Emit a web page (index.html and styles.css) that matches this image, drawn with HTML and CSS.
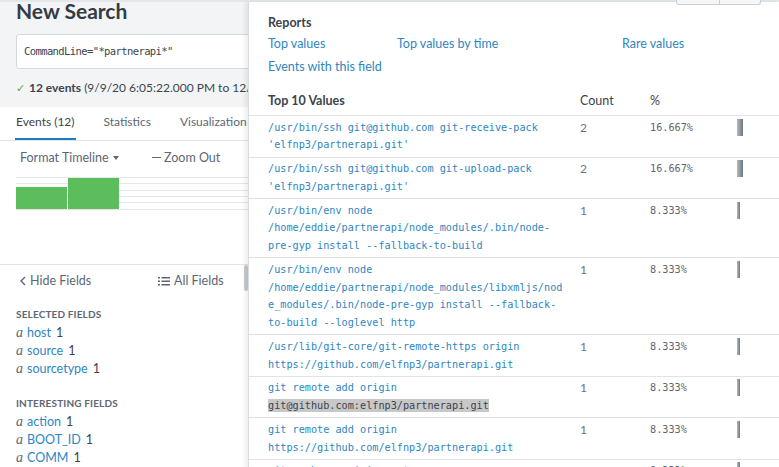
FILE: index.html
```html
<!DOCTYPE html>
<html>
<head>
<meta charset="utf-8">
<title>New Search</title>
<link rel="stylesheet" href="styles.css">
</head>
<body>
<div class="topline"></div>
<div class="app">
  <div class="main">
    <div class="top">
      <h1 class="title">New Search</h1>
      <div class="searchbox">CommandLine="*partnerapi*"</div>
      <div class="status"><span class="check">✓</span><b>12 events</b> (9/9/20 6:05:22.000 PM to 12/1/20 6:05:22.000 PM)</div>
    </div>
    <div class="tabs">
      <span class="tab active">Events (12)</span>
      <span class="tab">Statistics</span>
      <span class="tab">Visualization</span>
    </div>
    <div class="tlbar">
      <span class="fmt">Format Timeline <span class="caret"></span></span>
      <span class="zoom"><span class="dash"></span>Zoom Out</span>
    </div>
    <div class="timeline">
      <div class="grid"></div>
      <div class="bars">
        <div class="tbar" style="height:22px"></div>
        <div class="tbar" style="height:31px"></div>
      </div>
    </div>
    <div class="fields">
      <div class="fcol">
        <div class="frow-top">
          <span class="hide"><svg width="6" height="10" viewBox="0 0 6 10"><path d="M5 1 L1 5 L5 9" fill="none" stroke="#5c6773" stroke-width="1.4"/></svg>Hide Fields</span>
          <span class="all"><svg width="12" height="10" viewBox="0 0 12 10"><rect x="0" y="1" width="2" height="1.5" fill="#5c6773"/><rect x="0" y="4.5" width="2" height="1.5" fill="#5c6773"/><rect x="0" y="8" width="2" height="1.5" fill="#5c6773"/><rect x="3.5" y="1" width="8.5" height="1.5" fill="#5c6773"/><rect x="3.5" y="4.5" width="8.5" height="1.5" fill="#5c6773"/><rect x="3.5" y="8" width="8.5" height="1.5" fill="#5c6773"/></svg>All Fields</span>
        </div>
        <div class="fhead">Selected Fields</div>
        <ul class="flist">
          <li><i>a</i><a>host</a><span>1</span></li>
          <li><i>a</i><a>source</a><span>1</span></li>
          <li><i>a</i><a>sourcetype</a><span>1</span></li>
        </ul>
        <div class="fhead second">Interesting Fields</div>
        <ul class="flist">
          <li><i>a</i><a>action</a><span>1</span></li>
          <li><i>a</i><a>BOOT_ID</a><span>1</span></li>
          <li><i>a</i><a>COMM</a><span>1</span></li>
        </ul>
      </div>
      <div class="scroll"><div class="thumb"></div></div>
    </div>
  </div>
  <div class="popup">
    <div class="tbtns"><span></span><span></span></div>
    <div class="reports">
      <div class="h">Reports</div>
      <div class="links">
        <a>Top values</a><a>Top values by time</a><a>Rare values</a>
        <a>Events with this field</a>
      </div>
    </div>
    <table class="values">
      <colgroup><col class="c-val"><col class="c-count"><col class="c-pct"><col></colgroup>
      <thead>
        <tr><th class="val">Top 10 Values</th><th>Count</th><th>%</th><th></th></tr>
      </thead>
      <tbody>
        <tr><td class="val">/usr/bin/ssh git@github.com git-receive-pack 'elfnp3/partnerapi.git'</td><td class="count">2</td><td class="pct">16.667%</td><td><div class="bar" style="width:6px"></div></td></tr>
        <tr><td class="val">/usr/bin/ssh git@github.com git-upload-pack 'elfnp3/partnerapi.git'</td><td class="count">2</td><td class="pct">16.667%</td><td><div class="bar" style="width:6px"></div></td></tr>
        <tr><td class="val">/usr/bin/env node /home/eddie/partnerapi/node_modules/.bin/node-pre-gyp install --fallback-to-build</td><td class="count">1</td><td class="pct">8.333%</td><td><div class="bar" style="width:3px"></div></td></tr>
        <tr><td class="val">/usr/bin/env node /home/eddie/partnerapi/node_modules/libxmljs/node_modules/.bin/node-pre-gyp install --fallback-to-build --loglevel http</td><td class="count">1</td><td class="pct">8.333%</td><td><div class="bar" style="width:3px"></div></td></tr>
        <tr><td class="val">/usr/lib/git-core/git-remote-https origin https://github.com/elfnp3/partnerapi.git</td><td class="count">1</td><td class="pct">8.333%</td><td><div class="bar" style="width:3px"></div></td></tr>
        <tr><td class="val">git remote add origin <span class="sel">git@github.com:elfnp3/partnerapi.git</span></td><td class="count">1</td><td class="pct">8.333%</td><td><div class="bar" style="width:3px"></div></td></tr>
        <tr><td class="val">git remote add origin https://github.com/elfnp3/partnerapi.git</td><td class="count">1</td><td class="pct">8.333%</td><td><div class="bar" style="width:3px"></div></td></tr>
        <tr><td class="val">git push -u origin master</td><td class="count">1</td><td class="pct">8.333%</td><td><div class="bar" style="width:3px"></div></td></tr>
      </tbody>
    </table>
  </div>
</div>
</body>
</html>
```

FILE: styles.css
```css
* { box-sizing: border-box; }
html, body { margin: 0; padding: 0; }
body {
  width: 779px;
  height: 467px;
  overflow: hidden;
  background: #fff;
  color: #3c444d;
  font-family: Lato, "Open Sans", sans-serif;
  font-size: 12.5px;
}
a { color: #2e86c1; text-decoration: none; }

.topline { height: 2px; background: #e4e7ea; }
.app { display: flex; height: 465px; }

/* ---------- left main area ---------- */
.main {
  width: 248px;
  flex: none;
  overflow: hidden;
  display: flex;
  flex-direction: column;
  background: #fff;
  white-space: nowrap;
}
.top { height: 105px; background: #f2f4f5; padding-left: 16px; }
.title {
  margin: -2px 0 0 0;
  font-size: 21px;
  font-weight: 700;
  line-height: 22px;
  color: #343b42;
}
.searchbox {
  margin-top: 12px;
  width: 320px;
  height: 35px;
  background: #fff;
  border: 1px solid #d3d9de;
  border-radius: 3px;
  padding-left: 7px;
  font-family: "DejaVu Sans Mono", monospace;
  font-size: 10.5px;
  letter-spacing: -0.6px;
  line-height: 33px;
  color: #3c444d;
}
.status { margin-top: 11px; line-height: 16px; font-size: 12px; color: #3c444d; }
.status b { font-weight: 700; }
.check { color: #65a637; margin-right: 4px; font-size: 11px; }

.tabs {
  height: 34px;
  display: flex;
  gap: 27px;
  padding: 7px 0 0 15px;
  border-bottom: 1px solid #e1e6eb;
  background: #fff;
  font-size: 12px;
}
.tab { line-height: 16px; height: 26px; color: #5c6773; padding: 0 1px; }
.tab.active { color: #3c444d; border-bottom: 2px solid #1a7dc0; }

.tlbar { display: flex; padding: 9px 0 0 20px; line-height: 16px; color: #5c6773; }
.fmt { width: 132px; }
.caret {
  display: inline-block;
  width: 0; height: 0;
  border-left: 3px solid transparent;
  border-right: 3px solid transparent;
  border-top: 4px solid #5c6773;
  vertical-align: 2px;
  margin-left: 1px;
}
.dash { display: inline-block; width: 9px; height: 1.5px; background: #5c6773; vertical-align: 4px; margin-right: 3px; }

.timeline { margin: 11px 0 0 16px; height: 33px; display: grid; }
.timeline > * { grid-area: 1 / 1; }
.grid {
  background: repeating-linear-gradient(to bottom, #e4e7ea 0, #e4e7ea 1px, transparent 1px, transparent 6.33px);
}
.bars { display: flex; align-items: flex-end; gap: 1px; padding-bottom: 1px; }
.tbar { width: 51px; background: #5cbd5c; }

.fields { margin-top: 54px; border-top: 1px solid #e1e6eb; display: flex; flex: 1; }
.fcol { flex: 1; }
.scroll { width: 4px; }
.thumb { height: 26px; background: #c6cbcf; border-radius: 2px; }
.frow-top {
  display: flex;
  align-items: flex-start;
  height: 33px;
  padding: 8px 0 0 20px;
  line-height: 16px;
  color: #5c6773;
}
.hide { width: 138px; height: 16px; display: flex; align-items: center; }
.hide svg { margin-right: 4px; }
.all { height: 16px; display: flex; align-items: center; }
.all svg { margin-right: 4px; }
.fhead {
  margin: 8px 0 0 16px;
  line-height: 16px;
  font-size: 10px;
  font-weight: 700;
  text-transform: uppercase;
  color: #5c6773;
  letter-spacing: 0.15px;
}
.fhead.second { margin-top: 17px; }
.flist { list-style: none; margin: 2px 0 0 16px; padding: 0; }
.flist li { line-height: 18px; height: 18px; }
.flist i { font-family: "Liberation Serif", serif; font-size: 14px; color: #5c6773; margin-right: 4px; }
.flist a { margin-right: 5px; }

/* ---------- popup ---------- */
.popup {
  flex: 1;
  position: relative;
  background: #fff;
  border-left: 1px solid #d8dcdf;
  box-shadow: -3px 0 4px rgba(0, 0, 0, 0.07);
}
.tbtns { position: absolute; top: -2px; right: 18px; display: flex; }
.tbtns span {
  display: block;
  height: 5px;
  border: 1px solid #c8cfd5;
  border-top: none;
  background: #f5f6f7;
}
.tbtns span:first-child { width: 44px; border-radius: 0 0 0 3px; }
.tbtns span:last-child { width: 41px; border-left: none; border-radius: 0 0 3px 0; }

.reports { padding: 13px 0 0 19px; }
.h { font-weight: 700; line-height: 16px; color: #3c444d; }
.links {
  display: grid;
  grid-template-columns: 129px 225px auto;
  row-gap: 7px;
  margin-top: 5px;
  line-height: 16px;
}

.values {
  margin-top: 17px;
  width: 100%;
  table-layout: fixed;
  border-collapse: separate;
  border-spacing: 0;
}
.c-val { width: 331px; }
.c-count { width: 70px; }
.c-pct { width: 87px; }
.values th {
  text-align: left;
  font-weight: 400;
  line-height: 16px;
  padding: 1px 0 6px 0;
  border-bottom: 1px solid #e0e4e7;
  color: #3c444d;
}
.values th.val { font-weight: 700; padding-left: 19px; }
.values td {
  vertical-align: top;
  padding: 2.5px 0;
  line-height: 17.75px;
  border-bottom: 1px solid #e0e4e7;
}
.values td.val {
  padding-left: 19px;
  padding-right: 14px;
  font-family: "DejaVu Sans Mono", monospace;
  font-size: 10.2px;
  color: #2e86c1;
  overflow-wrap: break-word;
}
.sel { background: #c8c8c8; color: #3c444d; padding: 1px 0; }
.count { color: #6b7580; font-size: 12px; }
.pct { font-family: "DejaVu Sans Mono", monospace; font-size: 10.2px; color: #5c6773; }
.bar {
  height: 17px;
  background: linear-gradient(to right, #b4bac0, #6e777f);
}
```
